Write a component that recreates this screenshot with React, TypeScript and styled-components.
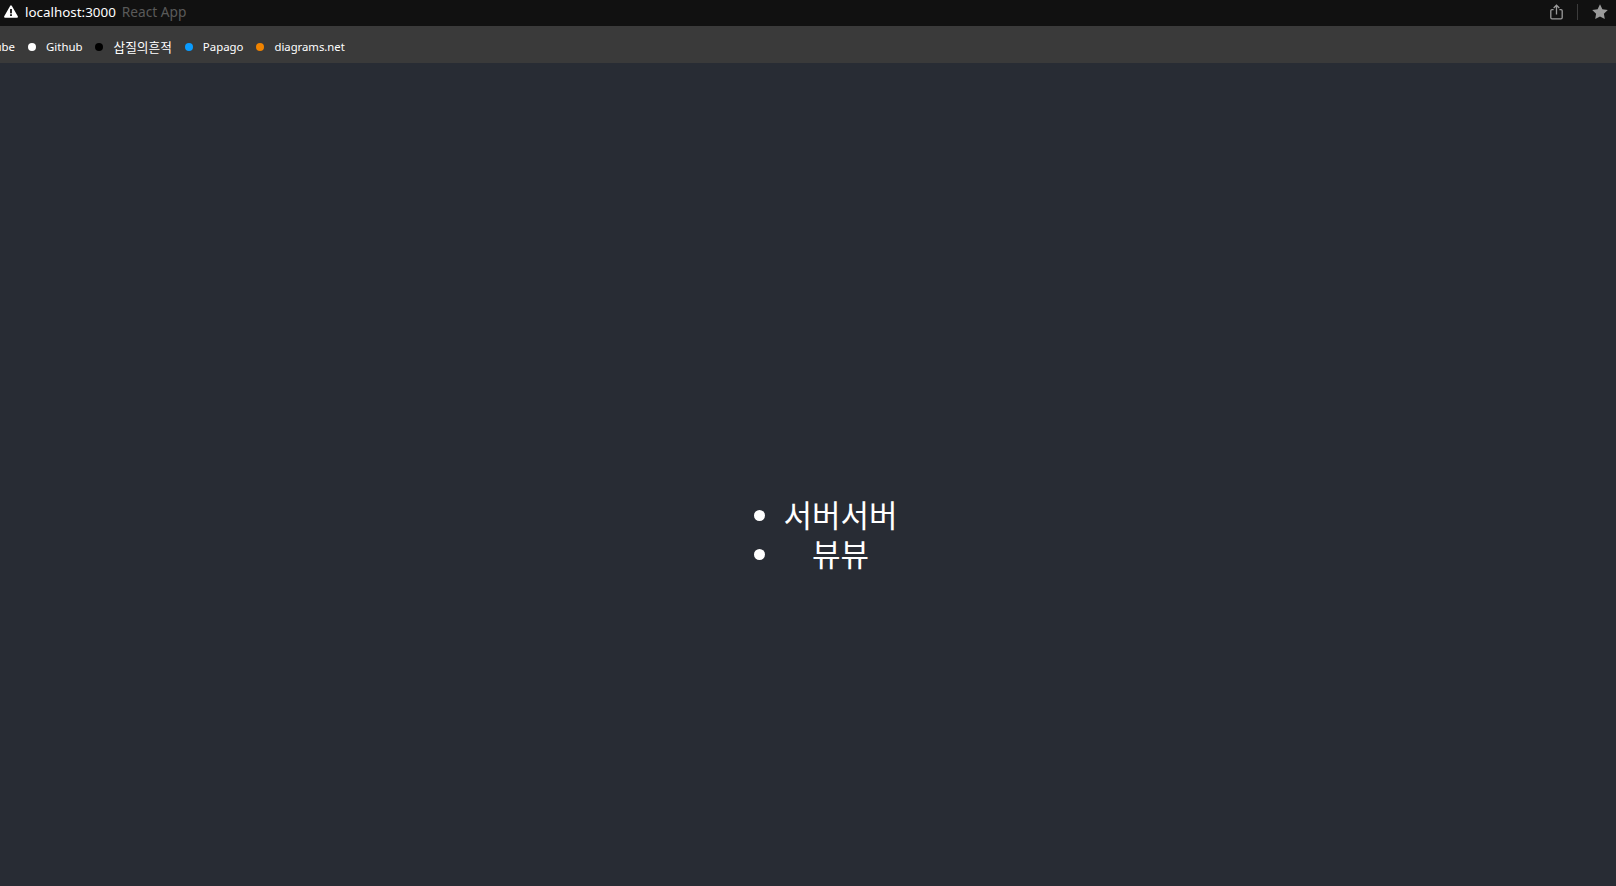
import { createGlobalStyle } from 'styled-components'
import styled from 'styled-components'

const bookmarks = [
  { label: 'YouTube', color: '#ff0000', size: 11.4 },
  { label: 'Github', color: '#ffffff', size: 11.4 },
  { label: '삽질의흔적', color: '#000000', size: 12.7 },
  { label: 'Papago', color: '#0a9cff', size: 11.4 },
  { label: 'diagrams.net', color: '#f08300', size: 11.3 },
]

const App = () => {
  return (
    <Page>
      <GlobalStyle />
      <TitleBar>
        <Address>
          <svg width="14" height="13" viewBox="0 0 14 13">
            <path d="M7 1.2 13 11.8H1Z" fill="#fff" stroke="#fff" strokeWidth="1.8" strokeLinejoin="round" />
            <rect x="6.1" y="4" width="1.8" height="4.4" fill="#111" />
            <rect x="6.1" y="9.2" width="1.8" height="1.8" fill="#111" />
          </svg>
          <Host>localhost:3000</Host>
          <PageTitle>React App</PageTitle>
        </Address>
        <Tools>
          <svg width="13" height="16" viewBox="0 0 13 16" fill="none" stroke="#9a9a9a" strokeWidth="1.3">
            <path d="M3.6 5.6H2A1.2 1.2 0 0 0 .8 6.8v6.8A1.2 1.2 0 0 0 2 14.8h9a1.2 1.2 0 0 0 1.2-1.2V6.8A1.2 1.2 0 0 0 11 5.6H9.4" />
            <path d="M6.5 10.5V1.4M3.7 4 6.5 1.2 9.3 4" />
          </svg>
          <Divider />
          <svg width="16" height="15" viewBox="0 0 16 15">
            <path d="M8 .3 10.4 5.2 15.8 6 11.9 9.7 12.8 15 8 12.5 3.2 15 4.1 9.7.2 6 5.6 5.2Z" fill="#9a9a9a" />
          </svg>
        </Tools>
      </TitleBar>
      <BookmarkBar>
        {bookmarks.map(b => (
          <Bookmark key={b.label} $size={b.size}>
            <Dot $color={b.color} />
            {b.label}
          </Bookmark>
        ))}
      </BookmarkBar>
      <Main>
        <List>
          <Item>서버서버</Item>
          <Item>뷰뷰</Item>
        </List>
      </Main>
    </Page>
  )
}

export default App

const GlobalStyle = createGlobalStyle`
  html, body {
    margin: 0;
    height: 100%;
    overflow: hidden;
    background: #282c34;
  }
`

const Page = styled.div`
  display: flex;
  flex-direction: column;
  height: 886px;
  font-family: 'Noto Sans', 'Noto Sans CJK KR', sans-serif;
`

const TitleBar = styled.div`
  display: flex;
  align-items: center;
  justify-content: space-between;
  box-sizing: border-box;
  height: 26px;
  padding: 0 8px 3px 4px;
  background: #111111;
`

const Address = styled.div`
  display: flex;
  align-items: center;
`

const Host = styled.span`
  margin-left: 7px;
  font-size: 13.4px;
  color: #ffffff;
`

const PageTitle = styled.span`
  margin-left: 6px;
  font-size: 13.7px;
  color: #5a5a5a;
`

const Tools = styled.div`
  display: flex;
  align-items: center;
  gap: 14px;
`

const Divider = styled.div`
  width: 1px;
  height: 16px;
  background: #3c3c3c;
`

const BookmarkBar = styled.div`
  display: flex;
  align-items: center;
  gap: 13px;
  box-sizing: border-box;
  height: 37px;
  padding-top: 4px;
  background: #3a3a3a;
  overflow: hidden;
`

const Bookmark = styled.div<{ $size: number }>`
  display: flex;
  align-items: center;
  flex-shrink: 0;
  gap: 10px;
  font-size: ${p => p.$size}px;
  color: #ffffff;

  &:first-child {
    margin-left: -49px;
  }
`

const Dot = styled.span<{ $color: string }>`
  width: 8px;
  height: 8px;
  border-radius: 50%;
  background: ${p => p.$color};
`

const Main = styled.main`
  flex: 1;
  display: flex;
  align-items: center;
  justify-content: center;
  padding-top: 120px;
  background: #282c34;
`

const List = styled.ul`
  margin: 0 0 0 25px;
  padding: 0 0 0 40px;
  color: #ffffff;
  font-size: 31px;
  line-height: 38.4px;
`

const Item = styled.li`
  text-align: center;
`
